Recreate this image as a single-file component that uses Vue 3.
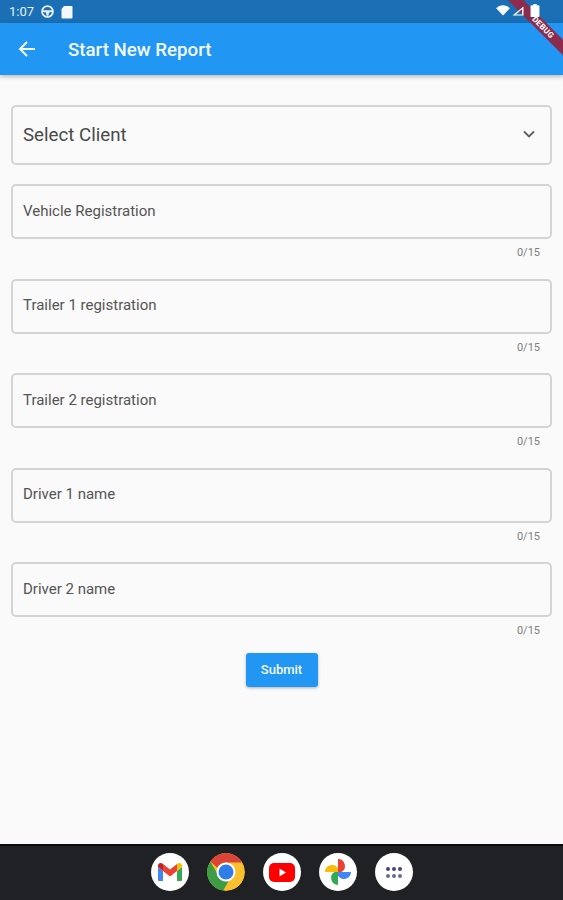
<template>
  <div class="screen">
    <div class="status-bar">
      <span class="time">1:07</span>
      <svg class="st-icon" width="13" height="13" viewBox="0 0 24 24">
        <circle cx="12" cy="12" r="10" fill="none" stroke="#e8f1f8" stroke-width="3.4" />
        <path d="M3 9.500h18v3l-6 1.500-1.500 6h-3L9 14l-6-1.500z" fill="#e8f1f8" />
      </svg>
      <svg class="st-icon" width="13" height="14" viewBox="0 0 13 14">
        <path d="M4 1h7.500a1 1 0 0 1 1 1v10.500a1 1 0 0 1-1 1h-9a1 1 0 0 1-1-1V4z" fill="#f4f8fb" />
      </svg>
    </div>

    <header class="app-bar">
      <svg class="back" width="18" height="18" viewBox="0 0 18 18">
        <path d="M17 9H2.500M9 2 2 9l7 7" fill="none" stroke="#f4faff" stroke-width="2" />
      </svg>
      <h1>Start New Report</h1>
    </header>

    <main class="form">
      <div class="select-box">
        <span class="select-label">Select Client</span>
        <svg width="12" height="8" viewBox="0 0 12 8">
          <path d="M1 1.500 6 6.500l5-5" fill="none" stroke="#5f5f5f" stroke-width="1.800" />
        </svg>
      </div>

      <div class="field-list">
        <div class="field-row" v-for="f in fields" :key="f">
          <div class="field">{{ f }}</div>
          <div class="counter">0/15</div>
        </div>
      </div>

      <button class="submit" type="button">Submit</button>
    </main>

    <footer class="dock">
      <div class="dock-icon white">
        <svg width="26" height="20" viewBox="0 0 26 20">
          <path d="M1 5v13a1 1 0 0 0 1 1h4V9z" fill="#4285f4" />
          <path d="M25 5v13a1 1 0 0 1-1 1h-4V9z" fill="#34a853" />
          <path d="M20 2v7l5 -4V3.500C25 1 22 0 20 2z" fill="#fbbc04" />
          <path d="M6 2v7l7 5.500L20 9V2l-7 5.500z" fill="#ea4335" />
          <path d="M1 3.500V5l5 4V2C4 0 1 1 1 3.500z" fill="#c5221f" />
        </svg>
      </div>
      <div class="dock-icon chrome">
        <svg width="38" height="38" viewBox="0 0 38 38">
          <circle cx="19" cy="19" r="19" fill="#fbc02d" />
          <path d="M19 0a19 19 0 0 1 16.500 9.500H19a9.500 9.500 0 0 0-8.500 5.200L3.200 8.500A19 19 0 0 1 19 0z" fill="#db4437" />
          <path d="M3.200 8.500 11 21.500a9.500 9.500 0 0 0 10.500 6.700L16 38A19 19 0 0 1 3.200 8.500z" fill="#3f9c46" />
          <circle cx="19" cy="19" r="9.500" fill="#fff" />
          <circle cx="19" cy="19" r="7.500" fill="#2f7de8" />
        </svg>
      </div>
      <div class="dock-icon white">
        <svg width="26" height="19" viewBox="0 0 26 19">
          <rect x="0" y="0" width="26" height="19" rx="5" fill="#f00" />
          <path d="M10.500 5.500v8l6.500-4z" fill="#fff" />
        </svg>
      </div>
      <div class="dock-icon white">
        <svg width="28" height="28" viewBox="0 0 28 28">
          <path d="M14 14H1a7 7 0 0 1 13-3.500z" fill="#fbbc04" />
          <path d="M14 14V1a7 7 0 0 1 3.500 13z" fill="#ea4335" />
          <path d="M14 14h13a7 7 0 0 1-13 3.500z" fill="#4285f4" />
          <path d="M14 14v13a7 7 0 0 1-3.500-13z" fill="#34a853" />
        </svg>
      </div>
      <div class="dock-icon white">
        <div class="dots">
          <i v-for="n in 6" :key="n" :class="{ dark: n < 4 }"></i>
        </div>
      </div>
    </footer>

    <div class="ribbon">DEBUG</div>

    <!-- battery sits on top of the debug ribbon, so this group is above it -->
    <div class="st-right">
      <svg width="14" height="11" viewBox="0 0 15 12"><path d="M0 3.500C4-.8 11-.8 15 3.500L7.500 11.500z" fill="#fff" /></svg>
      <svg class="signal" width="12" height="10" viewBox="0 0 12 12" preserveAspectRatio="none"><path d="M11.500 .5v11H.5zM10 4 3.800 10.200H10z" fill="#fff" fill-rule="evenodd" /></svg>
      <svg class="battery" width="10" height="13" viewBox="0 0 9 15" preserveAspectRatio="none"><path d="M3 0h3v1.500h1.500a1 1 0 0 1 1 1V14a1 1 0 0 1-1 1h-6a1 1 0 0 1-1-1V2.500a1 1 0 0 1 1-1H3z" fill="#fff" /></svg>
    </div>
  </div>
</template>

<script setup>
const fields = [
  'Vehicle Registration',
  'Trailer 1 registration',
  'Trailer 2 registration',
  'Driver 1 name',
  'Driver 2 name',
]
</script>

<style>
html, body { margin: 0; padding: 0; }
</style>

<style scoped>
.screen { position: relative; width: 563px; height: 900px; overflow: hidden; display: flex; flex-direction: column; background: #fafafa; font-family: Roboto, "Liberation Sans", sans-serif; }

.status-bar { height: 23px; flex: none; background: #1a6fb5; color: #e8f1f8; display: flex; align-items: center; padding: 0 0 0 9px; gap: 6px; font-size: 13px; box-sizing: border-box; }
.time { margin-right: 1px; }
.st-icon { display: block; }
.st-right { position: absolute; top: 5px; left: 496px; display: flex; align-items: flex-start; gap: 2px; }
.signal { margin-top: 1px; }
.battery { margin: -1px 0 0 4px; }

.app-bar { height: 52px; flex: none; background: #2196f3; display: flex; align-items: center; padding: 0 0 0 18px; box-shadow: 0 2px 4px rgba(0,0,0,.25); position: relative; }
.app-bar h1 { margin: 2px 0 0 32px; font-size: 18.700px; font-weight: 500; color: #f4faff; }
.back { display: block; }

.form { flex: 1; padding: 30px 11px 0; display: flex; flex-direction: column; }
.select-box { height: 60px; box-sizing: border-box; border: 2px solid #d4d4d4; border-radius: 5px; display: flex; align-items: center; justify-content: space-between; padding: 0 15px 2px 10px; font-size: 18.700px; color: #4a4a4a; }
.select-label { position: relative; top: 1px; }
.field-list { margin-top: 19px; display: flex; flex-direction: column; }
.field-row { height: 94.500px; }
.field { height: 55px; box-sizing: border-box; border: 2px solid #d4d4d4; border-radius: 5px; display: flex; align-items: center; padding: 0 10px 2px; font-size: 15px; color: #555; }
.counter { margin-top: 7px; padding-right: 12px; text-align: right; font-size: 11px; line-height: 14px; color: #808080; }
.submit { align-self: center; margin-top: -4px; width: 72px; height: 34px; border: none; border-radius: 3px; background: #2196f3; color: #f4faff; font: 500 13px Roboto, "Liberation Sans", sans-serif; box-shadow: 0 1px 3px rgba(0,0,0,.3); padding: 0; }

.dock { height: 56px; flex: none; box-sizing: border-box; background: #202124; border-top: 2px solid #0c0c0c; display: flex; align-items: center; justify-content: center; gap: 18px; padding-bottom: 2px; }
.dock-icon { width: 38px; height: 38px; border-radius: 50%; display: flex; align-items: center; justify-content: center; overflow: hidden; }
.dock-icon.white { background: #fff; }
.dots { display: grid; grid-template-columns: repeat(3, 4px); gap: 3px 2px; }
.dots i { width: 4px; height: 4px; border-radius: 50%; background: #6f6b8a; }
.dots i.dark { background: #45428a; }

.ribbon { position: absolute; top: 21.500px; right: -45px; width: 130px; height: 11px; line-height: 11px; background: #8c2b4d; color: #fff; font-size: 8px; font-weight: 700; text-align: center; transform: rotate(45deg); letter-spacing: .3px; }
</style>
